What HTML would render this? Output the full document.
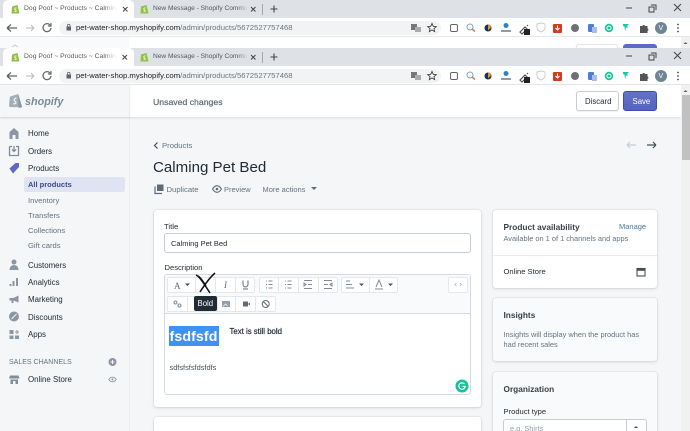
<!DOCTYPE html>
<html><head><meta charset="utf-8"><style>
html,body{margin:0;padding:0;width:690px;height:431px;overflow:hidden}
html{overflow:hidden}
body{background:#f4f6f8;font-family:"Liberation Sans",sans-serif;color:#212b36}
#r{position:absolute;left:0;top:0;width:690px;height:431px;overflow:hidden;background:#f4f6f8;filter:blur(.25px)}
.a,.t{position:absolute}
.t{white-space:nowrap;line-height:1}
svg{position:absolute;overflow:visible}
.card{position:absolute;background:#fff;border-radius:3px;box-shadow:0 0 0 1px rgba(63,63,68,.05),0 1px 3px rgba(63,63,68,.15)}
.nav{font-size:7.9px;color:#212b36;left:28px}
.sub{font-size:7.6px;color:#637381;left:28px}
.btn{position:absolute;background:#fff;border:1px solid #e4e8ec;box-sizing:border-box;height:16px;top:0}
.tab1{font-size:6.8px;color:#55595e}
.tab2{font-size:6.6px;color:#55595e}
.url{font-size:7.7px;color:#70757a}
</style></head><body><div id="r">

<!-- Chrome (two stacked copies) -->
<div class="a" style="left:0;top:0;width:690px;height:37px;background:#fff"></div>
<div class="a" style="left:0;top:37px;width:690px;height:11px;background:#fff"></div>
<div class="a" style="left:0;top:37px;width:129px;height:11px;background:#f9fafb"></div>
<div class="a" style="left:0;top:0;width:690px;height:18px;background:#dee1e6"></div>
<div class="a" style="left:3px;top:0;width:131px;height:18px;background:#fff;border-radius:5px 5px 0 0"></div>
<div class="a" style="left:59px;top:21px;width:382px;height:14px;border-radius:7px;background:#f1f3f4"></div>
<div class="a" style="left:0;top:36px;width:690px;height:1px;background:#e4e6e8"></div>

<div class="a" style="left:0;top:48px;width:690px;height:18px;background:#dee1e6"></div>
<div class="a" style="left:0;top:66px;width:690px;height:19px;background:#fff"></div>
<div class="a" style="left:3px;top:48px;width:131px;height:18px;background:#fff;border-radius:5px 5px 0 0"></div>
<div class="a" style="left:59px;top:69px;width:382px;height:14px;border-radius:7px;background:#f1f3f4"></div>
<div class="a" style="left:0;top:84px;width:690px;height:1px;background:#e4e6e8"></div>

<!-- Top Discard / Save peeking in y37-48 -->
<div class="a" style="left:576px;top:44px;width:42px;height:4px;background:#fff;border:1px solid #dfe3e8;border-bottom:0;border-radius:3px 3px 0 0;box-sizing:border-box"></div>
<div class="a" style="left:623px;top:44px;width:34px;height:4px;background:#5c6ac4;border-radius:3px 3px 0 0"></div>
<div class="a" style="left:681px;top:37px;width:9px;height:11px;background:#f1f1f1"></div>
<svg style="left:0;top:0" width="30" height="48"><path d="M12 47l3-2 3 2" fill="none" stroke="#c4cdd5" stroke-width="1"/></svg>

<!-- tab row 1 -->
<svg style="left:11px;top:4px" width="9" height="10" viewBox="0 0 9 10"><path d="M1 2.500L6.500 1 8.500 9.500 .5 9.500z" fill="#95bf47"/><path d="M3.500 7.500c1.500.5 2.500-.5 1-1.500s-.5-2.500 1-2" fill="none" stroke="#fff" stroke-width=".8"/></svg>
<div class="t tab1" style="left:24px;top:5.500px">Dog Poof ~ Products ~ Calming</div>
<div class="a" style="left:104px;top:1px;width:18px;height:16px;background:linear-gradient(90deg,rgba(255,255,255,0),#fff 70%)"></div>
<svg style="left:140px;top:4px" width="9" height="10" viewBox="0 0 9 10"><path d="M1 2.500L6.500 1 8.500 9.500 .5 9.500z" fill="#95bf47"/><path d="M3.500 7.500c1.500.5 2.500-.5 1-1.500s-.5-2.500 1-2" fill="none" stroke="#fff" stroke-width=".8"/></svg>
<div class="t tab2" style="left:153px;top:5.500px">New Message - Shopify Commu</div>
<div class="a" style="left:238px;top:1px;width:10px;height:16px;background:linear-gradient(90deg,rgba(222,225,230,0),#dee1e6)"></div>
<div class="a" style="left:262px;top:4px;width:1px;height:11px;background:#a5a8ac"></div>

<!-- tab row 2 -->
<svg style="left:11px;top:52px" width="9" height="10" viewBox="0 0 9 10"><path d="M1 2.500L6.500 1 8.500 9.500 .5 9.500z" fill="#95bf47"/><path d="M3.500 7.500c1.500.5 2.500-.5 1-1.500s-.5-2.500 1-2" fill="none" stroke="#fff" stroke-width=".8"/></svg>
<div class="t tab1" style="left:24px;top:53.500px">Dog Poof ~ Products ~ Calming</div>
<div class="a" style="left:104px;top:49px;width:18px;height:16px;background:linear-gradient(90deg,rgba(255,255,255,0),#fff 70%)"></div>
<svg style="left:140px;top:52px" width="9" height="10" viewBox="0 0 9 10"><path d="M1 2.500L6.500 1 8.500 9.500 .5 9.500z" fill="#95bf47"/><path d="M3.500 7.500c1.500.5 2.500-.5 1-1.500s-.5-2.500 1-2" fill="none" stroke="#fff" stroke-width=".8"/></svg>
<div class="t tab2" style="left:153px;top:53.500px">New Message - Shopify Commu</div>
<div class="a" style="left:238px;top:49px;width:10px;height:16px;background:linear-gradient(90deg,rgba(222,225,230,0),#dee1e6)"></div>
<div class="a" style="left:262px;top:52px;width:1px;height:11px;background:#a5a8ac"></div>

<!-- tab close / new tab / window controls -->
<svg style="left:0;top:0" width="690" height="66" fill="none" stroke="#444" stroke-width="1"><path d="M123 7l4.500 4.500M127.500 7L123 11.500M251 7l4.500 4.500M255.500 7L251 11.500M122.500 55l4.500 4.500M127 55l-4.500 4.500M251 55l4.500 4.500M255.500 55L251 59.500"/><path d="M270.500 9h7M274 5.500v7M270.500 57h7M274 53.500v7" stroke-width="1.100"/><path d="M626 8h6M651 5h5v5M649 7h5v5h-5zM674 4l7 7M681 4l-7 7M626 56h6M651 53h5v5M649 55h5v5h-5zM674 52l7 7M681 52l-7 7"/></svg>

<!-- toolbar icons row 1 & row 2 -->
<svg style="left:0;top:0" width="690" height="85" fill="none">
<g>
<path d="M7 28h10M7 28l4-3.500M7 28l4 3.500" stroke="#5f6368" stroke-width="1.300"/>
<path d="M26 28h8M34 28l-3-3M34 28l-3 3" stroke="#bfc2c5" stroke-width="1.200"/>
<path d="M50 25a4 4 0 1 0 1 3M51 23v3h-3" stroke="#5f6368" stroke-width="1.200"/>
<rect x="66.500" y="26.500" width="4.500" height="4" fill="#5f6368"/><path d="M67.500 26.500v-1a1.200 1.200 0 0 1 2.500 0v1" stroke="#5f6368" stroke-width=".8"/>
<rect x="411" y="24" width="6" height="6" fill="#777"/><rect x="415" y="27" width="6" height="5" fill="#aaa"/>
<path d="M432 23.500l1.300 2.800 3 .3-2.300 2 .7 3-2.700-1.600-2.700 1.600.7-3-2.300-2 3-.3z" stroke="#444" stroke-width=".9"/>
<rect x="450.500" y="24.500" width="7" height="7" rx="1.500" stroke="#666" stroke-width="1"/>
<circle cx="470" cy="27" r="3" stroke="#7da7c7" stroke-width="1"/><path d="M472 29l3 2.500" stroke="#d9652b" stroke-width="1.300"/>
<circle cx="488" cy="28" r="3.500" fill="#15335e"/><path d="M488 24.500a3.500 3.500 0 0 1 3 3l-3 3z" fill="#f29111"/>
<circle cx="506" cy="25.500" r="2.500" fill="#2f80c9"/><path d="M501 31h10" stroke="#5a7fa0" stroke-width="1.500"/>
<path d="M520 32l5-5 2 2-5 5zM527 26l1-1" stroke="#555" stroke-width="1.200"/><rect x="524" y="29" width="6" height="6" fill="#222"/>
<path d="M537 24l4-1 4 1v4c0 2-2 3-4 4-2-1-4-2-4-4z" stroke="#c9cccf" stroke-width="1"/>
<rect x="553" y="24" width="9" height="9" rx="1" fill="#d53a1b"/><path d="M557.500 25.500v4M555.500 28l2 2 2-2" stroke="#fff" stroke-width="1.100"/>
<circle cx="575" cy="28" r="4" fill="#6e7276"/>
<rect x="588" y="24" width="6" height="8" rx="1" fill="#4c7fdc"/><rect x="592" y="27" width="5" height="6" fill="#a9c0ec"/>
<circle cx="609" cy="28" r="4.200" fill="#15c39a"/><circle cx="609" cy="28" r="2" stroke="#fff" stroke-width="1"/>
<path d="M623 24h6l-2 2 1 2-2-.5-1 4-.5-5-1.500-.5z" fill="#1cc6a4"/>
<path d="M640 26h2.500a1.300 1.300 0 0 1 2.500 0h2.500v2.500a1.300 1.300 0 0 1 0 2.500v2h-7.500z" fill="#555"/>
<circle cx="661" cy="28" r="6" fill="#6f8593"/>
<circle cx="678" cy="24.500" r=".9" fill="#444"/><circle cx="678" cy="28" r=".9" fill="#444"/><circle cx="678" cy="31.500" r=".9" fill="#444"/>
</g>
<g transform="translate(0 48)">
<path d="M7 28h10M7 28l4-3.500M7 28l4 3.500" stroke="#5f6368" stroke-width="1.300"/>
<path d="M26 28h8M34 28l-3-3M34 28l-3 3" stroke="#bfc2c5" stroke-width="1.200"/>
<path d="M50 25a4 4 0 1 0 1 3M51 23v3h-3" stroke="#5f6368" stroke-width="1.200"/>
<rect x="66.500" y="26.500" width="4.500" height="4" fill="#5f6368"/><path d="M67.500 26.500v-1a1.200 1.200 0 0 1 2.500 0v1" stroke="#5f6368" stroke-width=".8"/>
<rect x="411" y="24" width="6" height="6" fill="#777"/><rect x="415" y="27" width="6" height="5" fill="#aaa"/>
<path d="M432 23.500l1.300 2.800 3 .3-2.300 2 .7 3-2.700-1.600-2.700 1.600.7-3-2.300-2 3-.3z" stroke="#444" stroke-width=".9"/>
<rect x="450.500" y="24.500" width="7" height="7" rx="1.500" stroke="#666" stroke-width="1"/>
<circle cx="470" cy="27" r="3" stroke="#7da7c7" stroke-width="1"/><path d="M472 29l3 2.500" stroke="#d9652b" stroke-width="1.300"/>
<circle cx="488" cy="28" r="3.500" fill="#15335e"/><path d="M488 24.500a3.500 3.500 0 0 1 3 3l-3 3z" fill="#f29111"/>
<circle cx="506" cy="25.500" r="2.500" fill="#2f80c9"/><path d="M501 31h10" stroke="#5a7fa0" stroke-width="1.500"/>
<path d="M520 32l5-5 2 2-5 5zM527 26l1-1" stroke="#555" stroke-width="1.200"/><rect x="524" y="29" width="6" height="6" fill="#222"/>
<path d="M537 24l4-1 4 1v4c0 2-2 3-4 4-2-1-4-2-4-4z" stroke="#c9cccf" stroke-width="1"/>
<rect x="553" y="24" width="9" height="9" rx="1" fill="#d53a1b"/><path d="M557.500 25.500v4M555.500 28l2 2 2-2" stroke="#fff" stroke-width="1.100"/>
<circle cx="575" cy="28" r="4" fill="#6e7276"/>
<rect x="588" y="24" width="6" height="8" rx="1" fill="#4c7fdc"/><rect x="592" y="27" width="5" height="6" fill="#a9c0ec"/>
<circle cx="609" cy="28" r="4.200" fill="#15c39a"/><circle cx="609" cy="28" r="2" stroke="#fff" stroke-width="1"/>
<path d="M623 24h6l-2 2 1 2-2-.5-1 4-.5-5-1.500-.5z" fill="#1cc6a4"/>
<path d="M640 26h2.500a1.300 1.300 0 0 1 2.500 0h2.500v2.500a1.300 1.300 0 0 1 0 2.500v2h-7.500z" fill="#555"/>
<circle cx="661" cy="28" r="6" fill="#6f8593"/>
<circle cx="678" cy="24.500" r=".9" fill="#444"/><circle cx="678" cy="28" r=".9" fill="#444"/><circle cx="678" cy="31.500" r=".9" fill="#444"/>
</g>
</svg>
<div class="t" style="left:658.500px;top:24.500px;font-size:7px;color:#fff">V</div>
<div class="t" style="left:658.500px;top:72.500px;font-size:7px;color:#fff">V</div>
<div class="t url" style="left:76px;top:24px"><span style="color:#202124">pet-water-shop.myshopify.com</span>/admin/products/5672527757468</div>
<div class="t url" style="left:76px;top:72px"><span style="color:#202124">pet-water-shop.myshopify.com</span>/admin/products/5672527757468</div>

<!-- Page: sidebar & top bar -->
<div class="a" style="left:0;top:85px;width:129px;height:346px;background:#f4f6f8;border-right:1px solid #ebeef0"></div>
<div class="a" style="left:0;top:85px;width:681px;height:32px;background:#fff;box-shadow:0 1px 2px rgba(63,63,68,.12)"></div>
<div class="a" style="left:0;top:85px;width:129px;height:32px;background:#f4f6f8;border-right:1px solid #ebeef0;box-shadow:0 1px 2px rgba(63,63,68,.08)"></div>
<svg style="left:9px;top:92px" width="14" height="17" viewBox="0 0 16 18"><path d="M1 4.500L10.500 1.500 15 16.500 1 16.500 0 15z" fill="#a4aeb8"/><path d="M10.500 1.500l4.500 15-4 1z" fill="#8996a3"/><path d="M5 12.500c2.500 1 4-1 2-2.500s-1-4 1.500-3.500" fill="none" stroke="#f4f6f8" stroke-width="1.300"/></svg>
<div class="t" style="left:25px;top:96.500px;font-size:10.800px;font-weight:bold;font-style:italic;color:#7c8a98">shopify</div>
<div class="t" style="left:153px;top:97.500px;font-size:8.700px;color:#5f6b77;-webkit-text-stroke:.2px #5f6b77">Unsaved changes</div>
<div class="a" style="left:576px;top:91px;width:43px;height:20px;background:#fff;border:1px solid #c4cdd5;border-radius:3px;box-sizing:border-box;box-shadow:0 1px 0 rgba(22,29,37,.05)"></div>
<div class="t" style="left:585px;top:97.500px;font-size:7.800px;color:#212b36">Discard</div>
<div class="a" style="left:623px;top:91px;width:34px;height:20px;background:linear-gradient(#6371c7,#5563c1);border:1px solid #3f4eae;border-radius:3px;box-sizing:border-box"></div>
<div class="t" style="left:632.500px;top:97.500px;font-size:7.800px;color:#fff">Save</div>

<!-- Scrollbar -->
<div class="a" style="left:681px;top:85px;width:9px;height:346px;background:#f1f1f1"></div>
<div class="a" style="left:682px;top:95px;width:8px;height:65px;background:#c1c1c1"></div>
<svg style="left:681px;top:88px" width="9" height="6"><path d="M2.500 4L4.500 2 6.500 4z" fill="#606060"/></svg>
<svg style="left:681px;top:40px" width="9" height="6"><path d="M2.500 4L4.500 2 6.500 4z" fill="#606060"/></svg>

<!-- Sidebar nav -->
<svg style="left:0;top:0" width="129" height="431">
<path d="M9.500 139v-7l4.500-4 4.500 4v7h-3v-4h-3v4z" fill="#8a96a3"/>
<path d="M9.500 146.500h2.500M16 146.500h2.500v9h-9v-9M14 146v5M12 149.500l2 2 2-2" fill="none" stroke="#7f8c99" stroke-width="1.300"/>
<path d="M9.500 168.500l6-5.500h3.500v4l-6 6.500z" fill="#5c6ac4"/>
<circle cx="14" cy="262" r="2.500" fill="#8a96a3"/><path d="M9.500 270c0-3 2-5 4.500-5s4.500 2 4.500 5z" fill="#8a96a3"/>
<path d="M10.500 286v-2M13.500 286v-5M17 286v-8" stroke="#8a96a3" stroke-width="2"/>
<path d="M9.500 298h4l5-2.500v7l-5-2v2.500h-2v-2.500h-2z" fill="#8a96a3"/>
<circle cx="14" cy="316.500" r="5" fill="#8a96a3"/><path d="M11.500 319l5-5" stroke="#f4f6f8" stroke-width="1"/>
<path d="M9.500 330h4v4h-4zM9.500 335.500h4v3.500h-4zM15 335.500h4v3.500h-4z" fill="#8a96a3"/><path d="M15 332h4M17 330v4" stroke="#8a96a3" stroke-width="1"/>
<path d="M10 375.500h8.500l1 3h-10.500zM10.500 379.500h7.500v4.500h-2.500v-3h-2.500v3h-2.500z" fill="#7f8c99"/>
<circle cx="112.500" cy="362" r="4" fill="#8a96a3"/><path d="M112.500 360v4M110.500 362h4" stroke="#f4f6f8" stroke-width="1"/>
<path d="M108.800 379.500c1-1.500 2.300-2.300 3.700-2.300s2.700.8 3.700 2.300c-1 1.500-2.300 2.300-3.700 2.300s-2.700-.8-3.700-2.300z" fill="none" stroke="#8a96a3" stroke-width=".9"/><circle cx="112.500" cy="379.500" r="1" fill="#8a96a3"/>
</svg>
<div class="t nav" style="top:130px">Home</div>
<div class="t nav" style="top:148px">Orders</div>
<div class="t nav" style="top:165px">Products</div>
<div class="a" style="left:24px;top:177px;width:101px;height:15px;background:#e0e4f2;border-radius:2px"></div>
<div class="t nav" style="top:181px;color:#3b4793;font-weight:bold;font-size:7.500px">All products</div>
<div class="t sub" style="top:196.500px">Inventory</div>
<div class="t sub" style="top:211.500px">Transfers</div>
<div class="t sub" style="top:226.500px">Collections</div>
<div class="t sub" style="top:241.500px">Gift cards</div>
<div class="t nav" style="top:262px">Customers</div>
<div class="t nav" style="top:279px">Analytics</div>
<div class="t nav" style="top:296px">Marketing</div>
<div class="t nav" style="top:314px">Discounts</div>
<div class="t nav" style="top:331px">Apps</div>
<div class="t" style="left:9px;top:358.500px;font-size:7px;color:#637381">SALES CHANNELS</div>
<div class="t nav" style="top:376px">Online Store</div>

<!-- Header -->
<svg style="left:153px;top:141px" width="6" height="9"><path d="M4.500 1.500L1.500 4.500 4.500 7.500" fill="none" stroke="#454f5b" stroke-width="1.200"/></svg>
<div class="t" style="left:162px;top:141.500px;font-size:7.700px;color:#637381">Products</div>
<div class="t" style="left:153px;top:160px;font-size:15.100px;color:#212b36">Calming Pet Bed</div>
<svg style="left:154px;top:184px" width="10" height="10"><path d="M3 .5h6.500v6.500h-6.500z" fill="#5f6b77"/><path d="M1 2.500v7h7" fill="none" stroke="#5f6b77" stroke-width="1.200"/></svg>
<div class="t" style="left:166.500px;top:185.500px;font-size:7.700px;color:#637381">Duplicate</div>
<svg style="left:212px;top:185px" width="10" height="8"><path d="M.5 4C2 1.700 3.500.7 5 .7s3 1 4.500 3.300C8 6.300 6.500 7.300 5 7.300S2 6.300.5 4z" fill="none" stroke="#5f6b77" stroke-width="1.100"/><circle cx="5" cy="4" r="1.300" fill="#5f6b77"/></svg>
<div class="t" style="left:224px;top:185.500px;font-size:7.500px;color:#637381">Preview</div>
<div class="t" style="left:262.500px;top:185.500px;font-size:7.500px;color:#637381">More actions</div>
<svg style="left:311px;top:187px" width="6" height="4"><path d="M0 0h6L3 3z" fill="#5f6b77"/></svg>
<svg style="left:626px;top:140px" width="30" height="10" fill="none" stroke-width="1.200"><path d="M1 5h9M1 5l3-3M1 5l3 3" stroke="#c4cdd5"/><path d="M21 5h9M30 5l-3-3M30 5l-3 3" stroke="#454f5b"/></svg>

<!-- Main card -->
<div class="card" style="left:154px;top:210px;width:327px;height:197px"></div>
<div class="t" style="left:164px;top:222.500px;font-size:7.700px;color:#212b36">Title</div>
<div class="a" style="left:164px;top:233px;width:307px;height:20px;background:#fff;border:1px solid #c4cdd5;border-radius:3px;box-sizing:border-box"></div>
<div class="t" style="left:171px;top:239.500px;font-size:7.500px;color:#212b36">Calming Pet Bed</div>
<div class="t" style="left:164.500px;top:263.500px;font-size:7.600px;color:#212b36">Description</div>

<!-- Editor -->
<div class="a" style="left:164px;top:274px;width:307px;height:121px;background:#fff;border:1px solid #d3dbe2;border-radius:3px;box-sizing:border-box"></div>
<div class="a" style="left:165px;top:275px;width:305px;height:38px;background:#f9fafb;border-bottom:1px solid #d3dbe2"></div>

<div class="a" style="left:167px;top:277px;width:0;height:0">
<div class="btn" style="left:0;width:29px;border-radius:2px 0 0 2px"></div>
<div class="btn" style="left:28px;width:21px"></div>
<div class="btn" style="left:48px;width:21px"></div>
<div class="btn" style="left:68px;width:20px;border-radius:0 2px 2px 0"></div>
<div class="btn" style="left:92px;width:20px;border-radius:2px 0 0 2px"></div>
<div class="btn" style="left:111px;width:21px"></div>
<div class="btn" style="left:131px;width:21px"></div>
<div class="btn" style="left:151px;width:20px;border-radius:0 2px 2px 0"></div>
<div class="btn" style="left:174px;width:29px;border-radius:2px 0 0 2px"></div>
<div class="btn" style="left:202px;width:29px;border-radius:0 2px 2px 0"></div>
<div class="btn" style="left:281px;width:20px;border-radius:2px"></div>
<div class="btn" style="left:0;top:19px;width:21px;border-radius:2px 0 0 2px"></div>
<div class="btn" style="left:20px;top:19px;width:31px"></div>
<div class="btn" style="left:50px;top:19px;width:19px"></div>
<div class="btn" style="left:68px;top:19px;width:21px"></div>
<div class="btn" style="left:88px;top:19px;width:21px;border-radius:0 2px 2px 0"></div>
</div>

<div class="t" style="left:174px;top:281.500px;font-size:9px;color:#5f6b77;font-family:'Liberation Serif',serif">A</div>
<svg style="left:0;top:0" width="480" height="320" fill="none">
<path d="M185 283.500h5l-2.500 2.500zM359 283.500h5l-2.500 2.500zM388 283.500h5l-2.500 2.500z" fill="#454f5b"/>
<path d="M266 281h1M268.500 281h4M266 284.500h1M268.500 284.500h4M266 288h1M268.500 288h4M285 281h1M287.500 281h4M285 284.500h1M287.500 284.500h4M285 288h1M287.500 288h4" stroke="#7f8c99" stroke-width="1"/>
<path d="M304 280.500h8M304 288.500h8M308 284.500h4M304 283v3l2-1.500zM324 280.500h8M324 288.500h8M324 284.500h4M332 283v3l-2-1.500z" stroke="#7f8c99" stroke-width="1"/>
<path d="M346 281h4M346 284.500h6M346 288h8" stroke="#7f8c99" stroke-width="1"/>
<path d="M376 287l3-7 3 7M375 289h8" stroke="#7f8c99" stroke-width="1"/>
<path d="M456.500 286l-1.500-1.500 1.500-1.500M460 286l1.500-1.500-1.500-1.500" stroke="#a5afb9" stroke-width=".8"/>
<path d="M243 280.500v4a2.500 2.500 0 0 0 5 0v-4M243 289h5" stroke="#5f6b77" stroke-width="1"/>
<circle cx="175.500" cy="302.500" r="1.500" stroke="#7f8c99" stroke-width="1"/><circle cx="179.500" cy="305.500" r="1.500" stroke="#7f8c99" stroke-width="1"/>
<rect x="222" y="301" width="8" height="6" fill="#919eab"/><path d="M223 306.500l2.500-2.500 2 2" stroke="#fff" stroke-width=".7"/>
<rect x="243" y="301.500" width="5" height="5" fill="#5f6b77"/><path d="M248 304l2-1.500v3z" fill="#5f6b77"/>
<circle cx="265.700" cy="304" r="3.500" stroke="#5f6b77" stroke-width="1"/><path d="M263.200 301.500l5 5" stroke="#5f6b77" stroke-width="1"/>
</svg>
<div class="t" style="left:224px;top:280.500px;font-size:9px;font-style:italic;color:#5f6b77;font-family:'Liberation Serif',serif">I</div>
<!-- Scribbled X -->
<svg style="left:192px;top:270px" width="26" height="26" fill="none" stroke="#111" stroke-width="1.500"><path d="M4 5c4 2 8 9 14 18M6 6c2 1 4 4 8 10M8 22c4-6 8-13 15-19"/></svg>
<!-- Tooltip -->
<div class="a" style="left:194px;top:296px;width:23px;height:15px;background:#212b36;border-radius:2px"></div>
<div class="t" style="left:197.500px;top:299.500px;font-size:7.800px;color:#fff">Bold</div>

<!-- Editor contents -->
<div class="a" style="left:169px;top:326px;width:50px;height:20px;background:#3f92f2"></div>
<div class="t" style="left:169.500px;top:329.500px;font-size:14.200px;font-weight:bold;color:#fff;letter-spacing:.1px">fsdfsfd</div>
<div class="t" style="left:229.500px;top:328px;font-size:7.800px;color:#212b36;-webkit-text-stroke:.2px #212b36">Text is still bold</div>
<div class="t" style="left:169.500px;top:363.500px;font-size:7.400px;color:#454f5b">sdfsfsfsfdsfdfs</div>
<svg style="left:455px;top:379px" width="14" height="14"><circle cx="7" cy="7" r="6.500" fill="#15c39a"/><path d="M9.500 5a3.200 3.200 0 1 0 .7 2.500H7.500" fill="none" stroke="#fff" stroke-width="1.200"/></svg>

<!-- second left card -->
<div class="card" style="left:154px;top:417px;width:327px;height:30px"></div>

<!-- Right cards -->
<div class="card" style="left:493px;top:210px;width:164px;height:78px"></div>
<div class="t" style="left:503.500px;top:223px;font-size:8.300px;font-weight:bold;color:#212b36;opacity:.9">Product availability</div>
<div class="t" style="left:619px;top:223px;font-size:7.500px;color:#43789e">Manage</div>
<div class="t" style="left:503.500px;top:235px;font-size:7.400px;color:#637381">Available on 1 of 1 channels and apps</div>
<div class="a" style="left:493px;top:255px;width:164px;height:1px;background:#e9ecef"></div>
<div class="t" style="left:503.500px;top:267.500px;font-size:7.600px;color:#212b36">Online Store</div>
<svg style="left:636px;top:267px" width="10" height="10" fill="none"><rect x="1" y="1.500" width="8" height="7.500" stroke="#454f5b" stroke-width="1.100"/><path d="M1 2.800h8" stroke="#454f5b" stroke-width="2"/></svg>

<div class="card" style="left:493px;top:298px;width:164px;height:63px;background:#f9fafb"></div>
<div class="t" style="left:503.500px;top:311px;font-size:8.300px;font-weight:bold;color:#212b36;opacity:.9">Insights</div>
<div class="t" style="left:503.500px;top:330.500px;font-size:7.400px;color:#637381">Insights will display when the product has</div>
<div class="t" style="left:503.500px;top:341px;font-size:7.400px;color:#637381">had recent sales</div>

<div class="card" style="left:493px;top:372px;width:164px;height:70px;background:#f9fafb"></div>
<div class="t" style="left:503.500px;top:385px;font-size:8.300px;font-weight:bold;color:#212b36;opacity:.9">Organization</div>
<div class="t" style="left:503.500px;top:407.500px;font-size:7.600px;color:#212b36">Product type</div>
<div class="a" style="left:503px;top:419px;width:144px;height:22px;background:#fff;border:1px solid #c4cdd5;border-radius:3px;box-sizing:border-box"></div>
<div class="a" style="left:626px;top:419px;width:1px;height:22px;background:#c4cdd5"></div>
<div class="t" style="left:510px;top:424.500px;font-size:7.400px;color:#919eab">e.g. Shirts</div>
<svg style="left:632px;top:425px" width="8" height="8"><path d="M2 3l2-2 2 2zM2 6h4L4 8z" fill="#454f5b"/></svg>

</div></body></html>
